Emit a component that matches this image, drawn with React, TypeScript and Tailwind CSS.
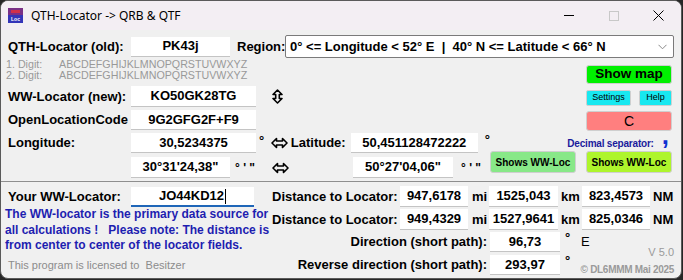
import React from "react";

const inp =
  "bg-white border-b border-[#c4c4c4] flex items-center justify-center font-bold text-[13px] text-black shrink-0";
const lbl = "font-bold text-[13px] text-black whitespace-nowrap shrink-0";

function HArrow() {
  return (
    <svg width="17" height="12" viewBox="0 0 17 12">
      <path
        d="M1 6 L5.5 1.5 V4 H11.5 V1.5 L16 6 L11.5 10.5 V8 H5.5 V10.5 Z"
        fill="none"
        stroke="black"
        strokeWidth="1.6"
        strokeLinejoin="round"
      />
    </svg>
  );
}

function VArrow() {
  return (
    <svg width="11" height="15" viewBox="0 0 11 15">
      <path
        d="M5.5 1 L10 5.5 H7.3 V9.5 H10 L5.5 14 L1 9.5 H3.7 V5.5 H1 Z"
        fill="none"
        stroke="black"
        strokeWidth="1.6"
        strokeLinejoin="round"
      />
    </svg>
  );
}

export default function App() {
  return (
    <div className="w-[683px] h-[280px] bg-[#262626] font-['Liberation_Sans',Arial,sans-serif] overflow-hidden">
      <div className="w-[682px] h-[279px] rounded-[8px] border border-[#5a5a5a] bg-[#f0f0f0] overflow-hidden flex flex-col">
        {/* Title bar */}
        <div className="h-[29px] bg-[#f3eef3] flex items-center shrink-0">
          <div className="ml-[7px] w-[15px] h-[15px] flex flex-col overflow-hidden">
            <div className="h-[7px] bg-[#7a2f86] flex items-center justify-center">
              <div className="w-[9px] h-[3px] bg-[#d0304a]" />
            </div>
            <div className="h-[8px] bg-[#3434b8] flex items-center justify-center text-white text-[5px] leading-[6px] font-bold">
              Loc
            </div>
          </div>
          <div className="ml-[8px] text-[12px] text-black font-['Noto_Sans',sans-serif] leading-none">
            QTH-Locator -&gt; QRB &amp; QTF
          </div>
          <div className="ml-auto flex h-full">
            <div className="w-[45px] h-full flex items-center justify-center">
              <div className="w-[10px] h-px bg-black" />
            </div>
            <div className="w-[45px] h-full flex items-center justify-center">
              <div className="w-[10px] h-[10px] border border-[#c8c8c8]" />
            </div>
            <div className="w-[45px] h-full flex items-center justify-center">
              <svg width="11" height="11" viewBox="0 0 11 11">
                <path d="M0.5 0.5 L10.5 10.5 M10.5 0.5 L0.5 10.5" stroke="black" strokeWidth="1" />
              </svg>
            </div>
          </div>
        </div>

        {/* Row 1 */}
        <div className="mt-[5px] h-[23px] flex items-center shrink-0">
          <div className={`${lbl} w-[130px] pl-[7px]`}>QTH-Locator (old):</div>
          <div className={`${inp} w-[99px] h-[20px]`}>PK43j</div>
          <div className={`${lbl} ml-[7px] w-[48px]`}>Region:</div>
          <div className="w-[389px] h-[23px] bg-white border border-[#7a7a7a] rounded-[2px] flex items-center pl-[4px] pr-[6px]">
            <span className="font-bold text-[13px] text-black whitespace-pre">
              0° &lt;= Longitude &lt; 52° E  |  40° N &lt;= Latitude &lt; 66° N
            </span>
            <svg className="ml-auto" width="9" height="6" viewBox="0 0 9 6">
              <path d="M0.5 0.8 L4.5 4.8 L8.5 0.8" fill="none" stroke="#8a8a8a" strokeWidth="1" />
            </svg>
          </div>
        </div>

        {/* Middle block */}
        <div className="h-[73px] flex shrink-0">
          <div className="w-[585px] flex flex-col">
            <div className="mt-[1px] pl-[5px] text-[10.7px] leading-[11px] text-[#999999]">
              <div className="flex">
                <span className="w-[53px]">1. Digit:</span>
                <span>ABCDEFGHIJKLMNOPQRSTUVWXYZ</span>
              </div>
              <div className="flex">
                <span className="w-[53px]">2. Digit:</span>
                <span>ABCDEFGHIJKLMNOPQRSTUVWXYZ</span>
              </div>
            </div>
            <div className="mt-[5px] h-[21px] flex items-center">
              <div className={`${lbl} w-[130px] pl-[7px]`}>WW-Locator (new):</div>
              <div className={`${inp} w-[125px] h-[21px]`}>KO50GK28TG</div>
              <div className="ml-[16px] flex items-center">
                <VArrow />
              </div>
            </div>
            <div className="mt-[3px] h-[20px] flex items-center">
              <div className={`${lbl} w-[130px] pl-[7px]`}>OpenLocationCode</div>
              <div className={`${inp} w-[125px] h-[20px]`}>9G2GFG2F+F9</div>
            </div>
          </div>
          <div className="w-[86px] flex flex-col">
            <div className="mt-[7px] h-[19px] bg-[#00f000] border border-[#cfcfcf] rounded-[3px] flex items-center justify-center font-bold text-[13.5px] text-black">
              Show map
            </div>
            <div className="mt-[6px] h-[16px] flex">
              <div className="w-[45px] h-full bg-[#18e8f0] border border-[#cfcfcf] rounded-[2px] flex items-center justify-center text-[9px] text-black">
                Settings
              </div>
              <div className="ml-auto w-[33px] h-full bg-[#18e8f0] border border-[#cfcfcf] rounded-[2px] flex items-center justify-center text-[9px] text-black">
                Help
              </div>
            </div>
            <div className="mt-[5px] h-[20px] bg-[#ff7f7f] border border-[#cfcfcf] rounded-[3px] flex items-center justify-center text-[14px] text-black">
              C
            </div>
          </div>
        </div>

        {/* Longitude / latitude block */}
        <div className="h-[50px] flex shrink-0">
          <div className="w-[489px] flex flex-col">
            <div className="mt-[2px] h-[20px] flex items-center">
              <div className={`${lbl} w-[130px] pl-[7px]`}>Longitude:</div>
              <div className={`${inp} w-[125px] h-[20px]`}>30,5234375</div>
              <div className="w-[16px] self-start pl-[3px] text-[13px] leading-[16px] font-bold">°</div>
              <div className="w-[21px] flex items-center">
                <HArrow />
              </div>
              <div className={`${lbl} w-[60px]`}>Latitude:</div>
              <div className={`${inp} w-[127px] h-[20px]`}>50,451128472222</div>
              <div className="self-start pl-[7px] text-[13px] leading-[14px] font-bold">°</div>
            </div>
            <div className="mt-[4px] h-[21px] flex items-center">
              <div className="w-[130px]" />
              <div className={`${inp} w-[99px] h-[21px]`}>30°31'24,38"</div>
              <div className="w-[42px] pl-[5px] text-[12px] font-bold whitespace-pre">° ' "</div>
              <div className="w-[81px] flex items-center">
                <HArrow />
              </div>
              <div className={`${inp} w-[100px] h-[21px]`}>50°27'04,06"</div>
              <div className="pl-[8px] text-[12px] font-bold whitespace-pre">° ' "</div>
            </div>
          </div>
          <div className="w-[183px] flex flex-col">
            <div className="h-[20px] flex items-start justify-end pr-[4px]">
              <span className="mt-[7px] text-[10px] leading-[12px] font-bold tracking-[-0.2px] text-[#1b1b9c]">
                Decimal separator:
              </span>
              <span className="ml-[8px] -mt-[9px] text-[26px] leading-[26px] font-black text-[#1030d0]">,</span>
            </div>
            <div className="h-[22px] flex">
              <div className="w-[86px] h-full bg-[#88e888] border border-[#cfcfcf] rounded-[3px] flex items-center justify-center text-[10px] font-bold text-black">
                Shows WW-Loc
              </div>
              <div className="ml-[10px] w-[86px] h-full bg-[#aef52c] border border-[#cfcfcf] rounded-[3px] flex items-center justify-center text-[10px] font-bold text-black">
                Shows WW-Loc
              </div>
            </div>
          </div>
        </div>

        {/* Separator */}
        <div className="h-px bg-[#8e8e8e] shrink-0" />

        {/* Bottom section */}
        <div className="flex-1 flex">
          <div className="w-[270px] flex flex-col shrink-0">
            <div className="mt-[5px] h-[20px] flex items-center">
              <div className={`${lbl} w-[130px] pl-[7px]`}>Your WW-Locator:</div>
              <div className="w-[123px] h-[20px] bg-white border-b-2 border-[#1f66b8] flex items-center justify-center font-bold text-[13px] text-black">
                JO44KD12
                <span className="w-px h-[15px] bg-black ml-px" />
              </div>
            </div>
            <div className="pl-[4px] text-[12px] leading-[15.5px] font-bold text-[#1e1eb0] whitespace-pre">
              The WW-locator is the primary data source for
              <br />
              all calculations !   Please note: The distance is
              <br />
              from center to center of the locator fields.
            </div>
            <div className="mt-[5px] pl-[7px] text-[11px] leading-[13px] text-[#8c8c8c] whitespace-pre">
              This program is licensed to  Besitzer
            </div>
          </div>
          <div className="flex-1 min-w-0 flex flex-col">
            <div className="mt-[4px] h-[21px] flex items-center">
              <div className={`${lbl} w-[129px] pl-[1px]`}>Distance to Locator:</div>
              <div className={`${inp} w-[68px] h-[21px]`}>947,6178</div>
              <div className={`${lbl} w-[21px] pl-[4px]`}>mi</div>
              <div className={`${inp} w-[69px] h-[21px]`}>1525,043</div>
              <div className={`${lbl} w-[24px] pl-[3px]`}>km</div>
              <div className={`${inp} w-[68px] h-[21px]`}>823,4573</div>
              <div className={`${lbl} pl-[3px]`}>NM</div>
            </div>
            <div className="mt-[2px] h-[21px] flex items-center">
              <div className={`${lbl} w-[129px] pl-[1px]`}>Distance to Locator:</div>
              <div className={`${inp} w-[68px] h-[21px]`}>949,4329</div>
              <div className={`${lbl} w-[21px] pl-[4px]`}>mi</div>
              <div className={`${inp} w-[69px] h-[21px]`}>1527,9641</div>
              <div className={`${lbl} w-[24px] pl-[3px]`}>km</div>
              <div className={`${inp} w-[68px] h-[21px]`}>825,0346</div>
              <div className={`${lbl} pl-[3px]`}>NM</div>
            </div>
            <div className="mt-[2px] flex">
              <div className="flex flex-col min-w-0 flex-1">
                <div className="h-[20px] flex items-center">
                  <div className={`${lbl} w-[219px] pr-[3px] text-right`}>Direction (short path):</div>
                  <div className={`${inp} w-[70px] h-[20px]`}>96,73</div>
                  <div className="self-start shrink-0 pl-[5px] w-[21px] text-[13px] leading-[12px] font-bold">°</div>
                  <div className="shrink-0 text-[13px] text-black">E</div>
                </div>
                <div className="mt-[3px] h-[20px] flex items-center">
                  <div className={`${lbl} w-[219px] pr-[3px] text-right`}>Reverse direction (short path):</div>
                  <div className={`${inp} w-[70px] h-[20px]`}>293,97</div>
                  <div className="self-start shrink-0 pl-[5px] text-[13px] leading-[12px] font-bold">°</div>
                </div>
              </div>
              <div className="shrink-0 pr-[7px] pt-[13px] flex flex-col items-end text-[#9a9a9a] whitespace-nowrap">
                <div className="text-[11px] leading-[14px]">V 5.0</div>
                <div className="mt-[4px] text-[10px] leading-[14px] font-bold tracking-[-0.3px]">© DL6MMM Mai 2025</div>
              </div>
            </div>
          </div>
        </div>
      </div>
    </div>
  );
}
